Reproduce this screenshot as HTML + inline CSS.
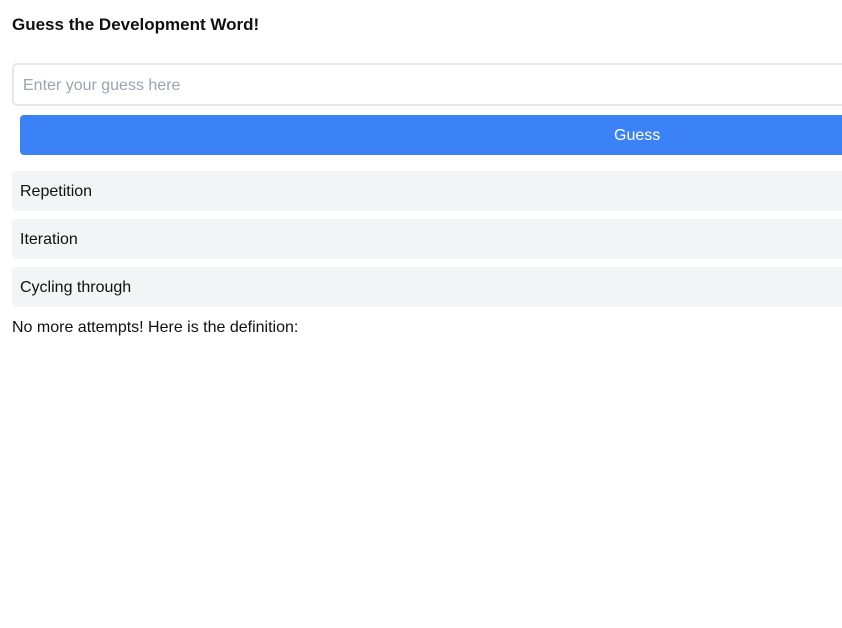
<!DOCTYPE html>
<html><head><style>
body{margin:0;width:842px;height:628px;overflow:hidden;background:#fff;font-family:"Liberation Sans",sans-serif;color:#111;}
h1{position:absolute;left:12px;top:15px;margin:0;font-size:17px;font-weight:bold;}
.inp{position:absolute;left:12px;top:63px;width:840px;height:43px;border:2px solid #e5e7eb;border-radius:5px;box-sizing:border-box;}
.inp span{position:absolute;left:9px;top:12px;font-size:16px;color:#9ca3af;}
.btn{position:absolute;left:20px;top:115px;width:840px;height:40px;background:#3b82f6;border-radius:4px;color:#fff;font-size:16px;}
.btn span{position:absolute;left:594px;top:12px;}
.it{position:absolute;left:12px;width:840px;height:40px;background:#f3f4f6;border-radius:4px;font-size:16px;}
.it span{position:absolute;left:8px;top:12px;}
.msg{position:absolute;left:12px;top:319px;font-size:16px;}
</style></head><body>
<h1>Guess the Development Word!</h1>
<div class="inp"><span>Enter your guess here</span></div>
<div class="btn"><span>Guess</span></div>
<div class="it" style="top:171px"><span>Repetition</span></div>
<div class="it" style="top:219px"><span>Iteration</span></div>
<div class="it" style="top:267px"><span>Cycling through</span></div>
<div class="msg">No more attempts! Here is the definition:</div>
</body></html>
